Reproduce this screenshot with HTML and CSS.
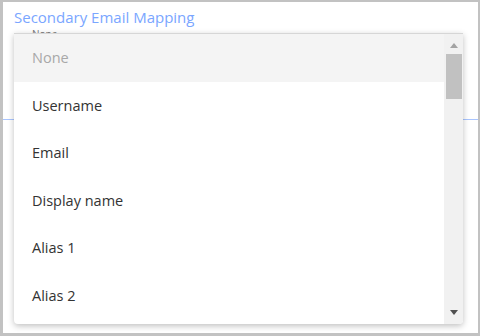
FILE: index.html
```html
<!DOCTYPE html>
<html lang="en">
<head>
  <meta charset="UTF-8" />
  <title>Secondary Email Mapping</title>
  <link rel="stylesheet" href="styles.css">
</head>
<body>
  <div class="panel">
    <div class="field">
      <label class="field-label">Secondary Email Mapping</label>
      <div class="field-value">None</div>
      <div class="field-line"></div>
    </div>

    <div class="menu">
      <ul class="menu-list">
        <li class="menu-item placeholder">None</li>
        <li class="menu-item">Username</li>
        <li class="menu-item">Email</li>
        <li class="menu-item">Display name</li>
        <li class="menu-item">Alias 1</li>
        <li class="menu-item">Alias 2</li>
      </ul>
      <div class="scrollbar">
        <div class="arrow up"></div>
        <div class="track"><div class="thumb"></div></div>
        <div class="arrow down"></div>
      </div>
    </div>
  </div>
</body>
</html>
```

FILE: styles.css
```css
html, body {
  margin: 0;
  height: 100%;
}

body {
  font-family: "Open Sans", "Noto Sans", sans-serif;
  background: #c2c2c2;
}

.panel {
  position: relative;
  box-sizing: border-box;
  height: 100%;
  margin: 0 2px 0 3px;
  border-top: 2px solid #c2c2c2;
  border-bottom: 3px solid #c2c2c2;
  background: #fff;
  overflow: hidden;
}

.field {
  padding: 6px 0 0 11px;
}

.field-label {
  display: block;
  font-size: 15px;
  line-height: 18px;
  color: #7aa6ff;
}

.field-value {
  margin-top: 3px;
  font-size: 10px;
  line-height: 11px;
  color: #777;
  padding-left: 18px;
}

.field-line {
  margin: 79px -11px 0 -11px;
  height: 1px;
  background: #a9c5ff;
}

.menu {
  position: absolute;
  left: 11px;
  top: 31px;
  width: 449px;
  height: 290px;
  display: flex;
  background: #fff;
  border-top: 1px solid #d6d6d6;
  border-radius: 0 0 4px 4px;
  box-shadow: 0 2px 6px rgba(0, 0, 0, 0.25);
  overflow: hidden;
}

.menu-list {
  flex: 1;
  list-style: none;
  margin: 0;
  padding: 0;
}

.menu-item {
  height: 47.5px;
  line-height: 47.5px;
  padding-left: 18px;
  font-size: 14.5px;
  color: #333;
}

.menu-item.placeholder {
  background: #f4f4f4;
  color: #a8a8a8;
}

.scrollbar {
  width: 19px;
  display: flex;
  flex-direction: column;
  align-items: center;
  background: #f1f1f1;
}

.arrow {
  width: 0;
  height: 0;
  border-left: 4px solid transparent;
  border-right: 4px solid transparent;
}

.arrow.up {
  margin: 9px 0 6px;
  border-bottom: 5px solid #a3a3a3;
}

.arrow.down {
  margin: 6px 0 9px;
  border-top: 5px solid #505050;
}

.track {
  flex: 1;
  width: 100%;
  display: flex;
  justify-content: center;
}

.thumb {
  width: 16px;
  height: 45px;
  background: #c1c1c1;
}
```
